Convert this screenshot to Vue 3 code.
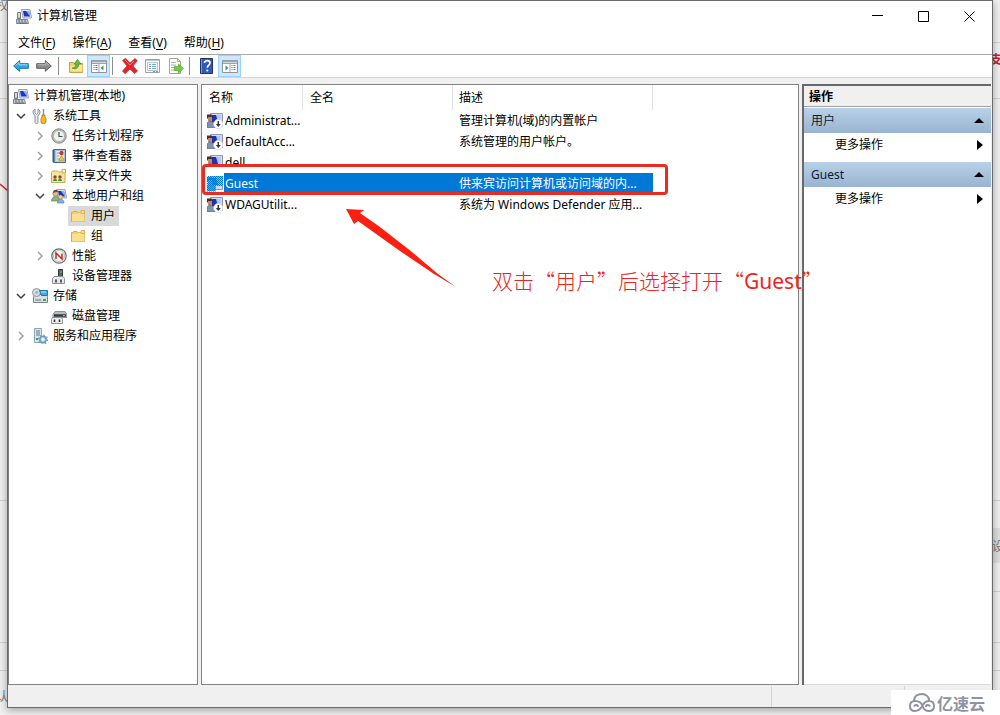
<script setup>
import { ref } from 'vue'

const monitor =
  '<path d="M5.500 1.500h8.500l1.500 8.500H7z" fill="#dfe3ec" stroke="#9aa3b5"/><path d="M7 3h6l1 5.500H8z" fill="#1b35c8"/><path d="M10 3h3l1 5.500z" fill="#8fb0f8"/>'

const person =
  '<path d="M3.500.5h12v13h-12z" fill="#cfdaf3" stroke="#8d99b8"/><path d="M5 2h6v7H5z" fill="#1c31b4"/><path d="M9 2h4.500v7H11z" fill="#b3c6f4"/><path d="M0 1.500h4.500l1 2-1 2H0z" fill="#4b2f22"/><path d="M1 4h4v4.500H1z" fill="#c08a72"/><path d="M0 10l2.500-2L8 10v4.500H0z" fill="#7d93b4" stroke="#45566e" stroke-width=".6"/>'

const icons = {
  computer:
    monitor +
    '<path d="M1.500 4.500h3v6h-3z" fill="#b8c0cc" stroke="#6f7a88"/><path d="M2 6h2M2 8h2" stroke="#eef2f6"/><path d="M0.500 11.500h11l1 4H0.500z" fill="#c3cad3" stroke="#7b8693"/><path d="M2 13h2m1 0h2m1 0h2M2 15h9" stroke="#5d6774"/>',
  tools:
    '<path d="M3 1v4l1.500 1.500L6 5V1c2 1 2.500 3.500 1.500 5L6 8v6.500c0 1.500-3 1.500-3 0V8L1.500 6C.5 4 1 2 3 1z" fill="#e4e8ec" stroke="#7f8a95" stroke-width=".9"/><path d="M11.500 1v6" stroke="#8995a1" stroke-width="1.500"/><path d="M10 7h3v2l1 1.500v4c-1 1.600-4 1.600-5 0v-4L10 9z" fill="#f4b526" stroke="#b47a0d" stroke-width=".8"/>',
  clock:
    '<circle cx="8" cy="8" r="7.200" fill="#b9bdc1" stroke="#85898e"/><circle cx="8" cy="8" r="5.500" fill="#f4f1dd" stroke="#9f9f9b" stroke-width=".6"/><path d="M8 4v4.500h3.500" fill="none" stroke="#31518a" stroke-width="1.200"/>',
  events:
    '<path d="M2.500 1.500h12v13h-12z" fill="#a9c6e6" stroke="#3c6a9c"/><path d="M1 3h3M1 5h3M1 7h3M1 9h3M1 11h3M1 13h3" stroke="#304e78"/><path d="M5.500 3h7.500v10H5.500z" fill="#f6f3dc"/><path d="M6 5h3M6 8h2M6 11h7" stroke="#7a93ba"/><circle cx="10.500" cy="5" r="2.200" fill="#d8332d"/><path d="M10.500 7.500l3 5h-6z" fill="#f1c232" stroke="#9a7b17" stroke-width=".5"/>',
  shared:
    '<path d="M.5 4.500l1-1.500h5l1 1h6.500v10.500H.5z" fill="#f8e49b" stroke="#cfa854"/><path d="M11 1.500h3.500V5H11z" fill="#fff3b5" stroke="#d0a848"/><path d="M2 13c0-3 4-3 4 0zM7 13c0-3 4-3 4 0z" fill="#3b9456"/><circle cx="4" cy="9" r="1.700" fill="#8b4a28"/><circle cx="9" cy="9" r="1.700" fill="#8b4a28"/>',
  users:
    monitor +
    '<circle cx="4.500" cy="5.500" r="2.700" fill="#e8b98c" stroke="#a07a50" stroke-width=".7"/><path d="M2 5c0-4 5-4 5-1-2 0-3 0-5 1z" fill="#6d4a2b"/><path d="M.5 13c0-6 8-6 8 0z" fill="#8db473" stroke="#5d8550" stroke-width=".7"/><circle cx="9.500" cy="9" r="2" fill="#f3d08c" stroke="#b98a45" stroke-width=".6"/><path d="M6.500 15c0-5 6.500-5 6.500 0z" fill="#86b3de" stroke="#4f7caa" stroke-width=".7"/>',
  folder:
    '<path d="M1.500 13.500v-9h1L4 3.500h3l1 1h6.500v9z" fill="#f2ce6d" stroke="#d3a850"/><path d="M2 6h6l1-1.500h5.500v9H2z" fill="#fbe08f"/><path d="M11 2.500h3.500v3H11z" fill="#f8dd89" stroke="#cca14b" stroke-width=".7"/>',
  performance:
    '<circle cx="8" cy="8" r="7.200" fill="#e9ecea" stroke="#66716c" stroke-width="1.200"/><circle cx="8" cy="8" r="5.500" fill="#fff" stroke="#a3aca7" stroke-width=".7"/><path d="M5 11V5l6 6V5.500" fill="none" stroke="#c52828" stroke-width="1.500"/>',
  device:
    '<path d="M7.500 1.500h4v7h-4z" fill="#596068" stroke="#33383e"/><path d="M9 3h2v2H9z" fill="#59ac6a"/><path d="M3 8.500h9l1.500 2v5h-12v-5z" fill="#e5e7e9" stroke="#8a9096"/><path d="M5 11.500v3m5-3v3" stroke="#292e33" stroke-width="1.500"/>',
  storage:
    '<path d="M1.500 8.500l2-2h10l2 2v6h-14z" fill="#d8dee3" stroke="#7a8791"/><path d="M3 12h6" stroke="#a0aab2" stroke-width="2"/><path d="M11 12h3" stroke="#36b54a" stroke-width="2"/><circle cx="4.500" cy="4.500" r="4" fill="#d5dde2" stroke="#8c979f"/><circle cx="4.500" cy="4.500" r="1.300" fill="#8aabc1"/><path d="M7.500 2.500h8v5h-6z" fill="#3fa9e2" stroke="#2272a6"/><path d="M9 4h5" stroke="#b9e8ff"/>',
  disk:
    '<path d="M4 3.500h10l2 3v3H2v-3z" fill="#b5bbc0" stroke="#8a9197"/><path d="M3 7.500h12" stroke="#343a40" stroke-width="2.500"/><path d="M12 7.500h2" stroke="#7dcc83"/><path d="M1.500 9.500h9l1 2v4h-11v-4z" fill="#eceef0" stroke="#8a9096"/><path d="M3.500 11.500v2.500m5-2.500v2.500" stroke="#292e33" stroke-width="1.500"/>',
  services:
    '<path d="M2.500.5h7v14h-7z" fill="#dce5ec" stroke="#8fa4b5"/><path d="M4 3h4M4 5h4M4 7h4" stroke="#5b7d98"/><path d="M4 11h2" stroke="#33aa48" stroke-width="2"/><circle cx="11" cy="11.500" r="3.200" fill="#b9d5eb" stroke="#6f9bc0" stroke-width="1.500"/><circle cx="11" cy="11.500" r="4.500" fill="none" stroke="#6f9bc0" stroke-width="1.200" stroke-dasharray="1.500 2"/><circle cx="11" cy="11.500" r="1.200" fill="#fff"/>',
  user: person,
  disabled:
    person +
    '<circle cx="11.300" cy="11" r="4.700" fill="#fff" stroke="#c4cad3" stroke-width=".6"/><path d="M11.300 8v4" stroke="#333" stroke-width="1.500"/><path d="M8.800 11h5l-2.500 3z" fill="#333"/>',
  back: '<path d="M.7 8l6-5.300v3h8.600v4.600H6.700v3z" fill="#2fa8e8" stroke="#1b6fae"/><path d="M2.500 7.500L6 4.500v2.300h8.500" fill="none" stroke="#93ddff"/>',
  forward:
    '<path d="M15.300 8l-6-5.300v3H.7v4.600h8.600v3z" fill="#8b8b8b" stroke="#5d5d5d"/><path d="M1.500 6.800h8.500V4.500l3.500 3" fill="none" stroke="#bebebe"/>',
  up: '<path d="M1.500 14.500v-10h4l1 1h8v9z" fill="#f4cf6a" stroke="#c9a14b"/><path d="M2.500 13V8l12-1v6.500z" fill="#fce49a"/><path d="M4 10c3 0 4-2 4-4H6l3.500-4.500L13 6h-2.300C10.500 10 8 12 4 10z" fill="#69bd38" stroke="#3b8421" stroke-width=".7"/>',
  treePane:
    '<path d="M.5 2.500h15v12H.5z" fill="#fff" stroke="#8b949d"/><path d="M1 3.500h14" stroke="#9fabb7" stroke-width="2"/><path d="M1 5.500h14M8 6v8" stroke="#9aa5b0"/><path d="M2.500 7.500h4m-4 2h4m-4 2h4" stroke="#487ba5" stroke-dasharray="1 1 3"/><path d="M12.500 7.500v5L9.500 10z" fill="#37a243"/>',
  actionPane:
    '<path d="M.5 2.500h15v12H.5z" fill="#fff" stroke="#8b949d"/><path d="M1 3.500h14" stroke="#9fabb7" stroke-width="2"/><path d="M1 5.500h14M8 6v8" stroke="#9aa5b0"/><path d="M9.500 7.500h4m-4 2h4m-4 2h4" stroke="#487ba5" stroke-dasharray="1 1 3"/><path d="M3.500 7.500v5l3-2.500z" fill="#37a243"/>',
  remove:
    '<path d="M.5 2.500L3.500.3 8 5 13 .5l2.300 2.100L11 8l4.500 5-3 2.500L8 11 3 15.700.5 13 5 8z" fill="#e3262b" stroke="#b9282c" stroke-width=".7"/><path d="M3 2l5 5 4-4" fill="none" stroke="#f58283"/>',
  properties:
    '<path d="M.5 1.500h14v13H.5z" fill="#fff" stroke="#98a2ad"/><path d="M1 2.500h13" stroke="#bcc6cf"/><path d="M2.500 4.500h10v8h-10z" fill="#f4f8fc" stroke="#b6c3d0"/><path d="M4 6.500h2m1 0h4m-7 2h2m1 0h4m-7 2h2m1 0h4" stroke="#7fa5c6"/><path d="M8 13.500h2m1 0h2" stroke="#8a959e"/>',
  export:
    '<path d="M1.500.5h8l3 3v12h-11z" fill="#fffef0" stroke="#a6a797"/><path d="M9.500.5v3h3" fill="none" stroke="#a6a797"/><path d="M3 4.500h5M3 7h5M3 9.500h3M3 12h5" stroke="#a9b2b9"/><path d="M6.500 8.500h4V6l5 4.500-5 4.500v-2.500h-4z" fill="#74cc45" stroke="#4fa534" stroke-width=".7"/>',
  help: '<path d="M1.500.5h12v15h-12z" fill="#3159b8" stroke="#1b3273"/><path d="M2.500 1v14" stroke="#7797dc"/><path d="M5.500 5c0-3.300 5.500-3 5.500 0 0 2-2.700 2.300-2.700 4.700" fill="none" stroke="#fff" stroke-width="1.700"/><circle cx="8.300" cy="12.500" r="1.100" fill="#fff"/>',
}

const menus = [
  ['文件', 'F'],
  ['操作', 'A'],
  ['查看', 'V'],
  ['帮助', 'H'],
]

const toolbar = [
  [
    { icon: 'back', tip: '后退' },
    { icon: 'forward', tip: '前进' },
  ],
  [
    { icon: 'up', tip: '向上一级' },
    { icon: 'treePane', tip: '显示/隐藏控制台树', on: true },
  ],
  [
    { icon: 'remove', tip: '删除' },
    { icon: 'properties', tip: '属性' },
    { icon: 'export', tip: '导出列表' },
  ],
  [
    { icon: 'help', tip: '帮助' },
    { icon: 'actionPane', tip: '显示/隐藏操作窗格', on: true },
  ],
]

const tree = [
  { level: 0, icon: 'computer', name: '计算机管理(本地)' },
  { level: 1, icon: 'tools', name: '系统工具', toggle: 'open' },
  { level: 2, icon: 'clock', name: '任务计划程序', toggle: 'closed' },
  { level: 2, icon: 'events', name: '事件查看器', toggle: 'closed' },
  { level: 2, icon: 'shared', name: '共享文件夹', toggle: 'closed' },
  { level: 2, icon: 'users', name: '本地用户和组', toggle: 'open' },
  { level: 3, icon: 'folder', name: '用户' },
  { level: 3, icon: 'folder', name: '组' },
  { level: 2, icon: 'performance', name: '性能', toggle: 'closed' },
  { level: 2, icon: 'device', name: '设备管理器' },
  { level: 1, icon: 'storage', name: '存储', toggle: 'open' },
  { level: 2, icon: 'disk', name: '磁盘管理' },
  { level: 1, icon: 'services', name: '服务和应用程序', toggle: 'closed' },
]
const current = ref('用户')

const users = [
  { name: 'Administrat...', icon: 'disabled', note: '管理计算机(域)的内置帐户' },
  { name: 'DefaultAcc...', icon: 'disabled', note: '系统管理的用户帐户。' },
  { name: 'dell', icon: 'user', note: '' },
  { name: 'Guest', icon: 'user', note: '供来宾访问计算机或访问域的内...' },
  { name: 'WDAGUtilit...', icon: 'disabled', note: '系统为 Windows Defender 应用...' },
]
const selected = ref('Guest')
</script>

<template>
  <div class="desktop" lang="zh-CN">
    <div class="behind" aria-hidden="true">
      <i class="rule r1"></i><i class="rule r2"></i><i class="rule r3"></i>
      <i class="rule r4"></i><i class="rule r5"></i><i class="rule r6"></i>
      <i class="band"></i>
      <span class="bit b1">权</span>
      <span class="bit b2">认</span>
      <span class="bit b3">支</span>
      <span class="bit b4">设</span>
      <svg class="slash" width="8" height="10"><path d="M0 1l8 7" stroke="#d8232f" stroke-width="1.500" /></svg>
    </div>

    <main class="window">
      <header class="titlebar">
        <svg class="icon" viewBox="0 0 16 16" v-html="icons.computer"></svg>
        <h1>计算机管理</h1>
        <button class="sys" aria-label="最小化">
          <svg width="11" height="11"><path d="M0 4.500h11" stroke="#000" /></svg>
        </button>
        <button class="sys" aria-label="最大化">
          <svg width="11" height="11"><path d="M.5.5h10v10H.5z" fill="none" stroke="#000" /></svg>
        </button>
        <button class="sys" aria-label="关闭">
          <svg width="11" height="11"><path d="M.5.5l10 10m0-10l-10 10" stroke="#000" /></svg>
        </button>
      </header>

      <nav class="menubar">
        <button v-for="[label, key] in menus" :key="key">{{ label }}(<u>{{ key }}</u>)</button>
      </nav>

      <div class="toolbar">
        <div v-for="(group, g) in toolbar" :key="g" class="group">
          <button
            v-for="tool in group"
            :key="tool.icon"
            :class="{ on: tool.on }"
            :aria-label="tool.tip"
          >
            <svg class="icon" viewBox="0 0 16 16" v-html="icons[tool.icon]"></svg>
          </button>
        </div>
      </div>

      <div class="panes">
        <ul class="tree">
          <li v-for="node in tree" :key="node.name" :class="'level' + node.level">
            <button v-if="node.toggle" class="toggle" :aria-label="node.name">
              <svg v-if="node.toggle === 'open'" width="10" height="10">
                <path d="M1 3l4 4 4-4" fill="none" stroke="#404040" stroke-width="1.500" />
              </svg>
              <svg v-else width="10" height="10">
                <path d="M3 1l4 4-4 4" fill="none" stroke="#a0a0a0" stroke-width="1.500" />
              </svg>
            </button>
            <span v-else-if="node.level" class="toggle"></span>
            <button class="node" :class="{ current: node.name === current }" @click="current = node.name">
              <svg class="icon" viewBox="0 0 16 16" v-html="icons[node.icon]"></svg>
              {{ node.name }}
            </button>
          </li>
        </ul>

        <section class="list">
          <table>
            <thead>
              <tr>
                <th class="c-name">名称</th>
                <th class="c-full">全名</th>
                <th class="c-note">描述</th>
              </tr>
            </thead>
            <tbody>
              <tr
                v-for="user in users"
                :key="user.name"
                :class="{ selected: user.name === selected }"
                @click="selected = user.name"
              >
                <td>
                  <div class="cell">
                    <span class="pic"><svg class="icon" viewBox="0 0 16 16" v-html="icons[user.icon]"></svg></span>
                    <span class="name">{{ user.name }}</span>
                  </div>
                </td>
                <td></td>
                <td>{{ user.note }}</td>
              </tr>
            </tbody>
          </table>
          <div class="mark"></div>
          <svg class="pointer" width="112" height="80" viewBox="0 0 112 80">
            <path d="M0 1l18 1-4 3 20 14 32 25 26 22 18 13-22-13-34-23L12 13l-4 3z" fill="#fb2012" />
          </svg>
          <p class="callout">双击“用户”后选择打开“<span>Guest</span>”</p>
        </section>

        <aside class="actions">
          <h2>操作</h2>
          <template v-for="title in ['用户', 'Guest']" :key="title">
            <button class="section">
              {{ title }}
              <svg width="10" height="5"><path d="M0 5h10L5 0z" /></svg>
            </button>
            <button class="more">
              更多操作
              <svg width="6" height="10"><path d="M0 0v10l6-5z" /></svg>
            </button>
          </template>
        </aside>
      </div>

      <footer class="status"><span></span><span></span><span></span></footer>
    </main>

    <div class="brand">
      <svg width="26" height="20" viewBox="0 0 26 20" fill="none" stroke="#8e93a3" stroke-width="2">
        <path d="M5 8C5 3 9 1 13 1s7 3 7 6" />
        <path d="M14 14c-1-4-4-6-8-6-3 0-5 2-5 5s2 5 5 5c5 0 6-3 8-6 1-2 3-4 6-4s5 2 5 5-2 5-5 5-5-1-6-4" />
        <path d="M5 13.500c1-2 4-2 4 .5M21 13.500c-1-2-4-2-4 .5" />
      </svg>
      <span>亿速云</span>
    </div>
  </div>
</template>

<style>
html,
body {
  margin: 0;
  height: 100%;
}
#app {
  height: 100%;
}
</style>

<style scoped>
* {
  box-sizing: border-box;
}
.desktop {
  position: relative;
  display: flex;
  height: 100vh;
  padding: 0 7px 7px;
  overflow: hidden;
  background: #f0f0f0;
  color: #000;
  font: 12px/20px 'Noto Sans', 'Noto Sans CJK SC', sans-serif;
}
button {
  margin: 0;
  padding: 0;
  border: 0;
  background: none;
  color: inherit;
  font: inherit;
}
svg {
  display: block;
  flex: none;
}
.icon {
  width: 16px;
  height: 16px;
}

.behind {
  position: absolute;
  inset: 0;
}
.rule,
.band {
  position: absolute;
  left: 0;
  right: 0;
  height: 1px;
  background: #d0d0d0;
}
.r1 { top: 42px; }
.r2 { top: 98px; }
.r3 { top: 500px; }
.r4 { top: 591px; left: 50%; }
.r5 { top: 642px; }
.r6 { top: 670px; }
.band {
  top: 528px;
  left: 50%;
  height: 35px;
  background: #dedede;
}
.bit {
  position: absolute;
  color: #777;
}
.b1 { top: -4px; left: -4px; }
.b2 { top: 687px; left: -4px; }
.b3 { top: 50px; left: 990px; color: #c8242b; font-weight: bold; }
.b4 { top: 537px; left: 992px; }
.slash {
  position: absolute;
  top: 183px;
  left: 0;
}

.window {
  position: relative;
  display: flex;
  flex: 1;
  flex-direction: column;
  min-width: 0;
  border: 1px solid #6b6b6b;
  background: #f0f0f0;
  box-shadow: 0 2px 8px rgba(0, 0, 0, 0.35);
}
.titlebar {
  display: flex;
  align-items: center;
  height: 30px;
  padding-left: 8px;
  background: #fff;
}
h1 {
  flex: 1;
  margin: 0 0 0 5px;
  font-size: 12px;
  font-weight: normal;
}
.sys {
  display: flex;
  align-items: center;
  justify-content: center;
  width: 46px;
  height: 28px;
}
.menubar {
  display: flex;
  gap: 1px;
  height: 24px;
  padding-left: 2px;
  border-bottom: 1px solid #a8a8a8;
  background: #fff;
}
.menubar button {
  padding: 0 8px;
}
u {
  text-underline-offset: 2px;
}
.toolbar {
  display: flex;
  height: 23px;
  padding-left: 1px;
  border-bottom: 1px solid #d5d5d5;
  background: #fff;
}
.group {
  display: flex;
}
.group + .group::before {
  content: '';
  width: 1px;
  height: 18px;
  margin: 2px 5px 2px 3px;
  background: #8c8c8c;
}
.group + .group ~ .group::before {
  margin-left: 2px;
}
.group button {
  display: flex;
  align-items: center;
  justify-content: center;
  width: 23px;
  height: 22px;
}
.group .on {
  border: 1px solid #99d1ff;
  background: #cce8ff;
}

.panes {
  display: flex;
  flex: 1;
  gap: 3px;
  min-height: 0;
  padding: 6px 1px 0 0;
}
.tree {
  flex: none;
  width: 190px;
  margin: 0;
  padding: 1px 0 0;
  border: 1px solid #828282;
  background: #fff;
  list-style: none;
}
.tree li {
  display: flex;
  height: 20px;
}
.level0 { padding-left: 2px; }
.level1 { padding-left: 3px; }
.level2 { padding-left: 22px; }
.level3 { padding-left: 41px; }
.toggle {
  display: flex;
  align-items: center;
  justify-content: center;
  width: 18px;
  height: 20px;
}
.node {
  display: flex;
  align-items: center;
  gap: 5px;
  padding: 0 4px 0 2px;
  white-space: nowrap;
}
.current {
  background: #d9d9d9;
}

.list {
  position: relative;
  flex: 1;
  min-width: 0;
  border: 1px solid #828282;
  background: #fff;
}
table {
  width: 451px;
  border-collapse: separate;
  border-spacing: 0;
  table-layout: fixed;
}
th,
td {
  height: 21px;
  padding: 0 0 0 7px;
  font-weight: normal;
  text-align: left;
  white-space: nowrap;
}
th {
  height: 25px;
  border-right: 1px solid #e2e2e2;
}
.c-name { width: 101px; }
.c-full { width: 150px; }
.c-note { width: 200px; }
td:first-child {
  padding-left: 5px;
}
td:last-child,
.c-note {
  padding-left: 6px;
}
.cell {
  display: flex;
  align-items: center;
  height: 21px;
}
.pic {
  margin-right: 2px;
}
.name {
  flex: 1;
}
.selected td {
  background: #0078d7;
  color: #fff;
}
.selected td:first-child {
  background: linear-gradient(90deg, #fff 22px, #0078d7 22px);
}
.selected .pic {
  position: relative;
}
.selected .pic::after {
  content: '';
  position: absolute;
  inset: 0;
  background:
    repeating-conic-gradient(#0078d7 0 25%, transparent 0 50%) 0 0 / 2px 2px,
    rgba(120, 180, 235, 0.5);
  clip-path: polygon(0 0, 100% 0, 100% 65%, 55% 65%, 55% 100%, 0 100%);
}
.mark {
  position: absolute;
  top: 79px;
  left: 0;
  width: 466px;
  height: 31px;
  border: 3px solid #ed2a20;
  border-radius: 4px;
  background: linear-gradient(#fff 6px, transparent 6px);
  pointer-events: none;
}
.pointer {
  position: absolute;
  top: 123px;
  left: 144px;
}
.callout {
  position: absolute;
  z-index: 1;
  top: 179px;
  left: 290px;
  margin: 0;
  color: #ee241c;
  font: 300 21px/32px 'Noto Sans CJK SC', sans-serif;
  white-space: nowrap;
}
.callout span {
  font-family: 'Noto Sans', sans-serif;
  font-weight: 400;
}

.actions {
  flex: none;
  width: 189px;
  border: solid #696969;
  border-width: 2px 0 0 2px;
  box-shadow: inset 0 -1px #d9d9d9;
  background: #fff;
}
h2 {
  height: 21px;
  margin: 0 0 1px;
  padding-left: 5px;
  border-bottom: 1px solid #a0a0a0;
  background: #f0f0f0;
  font-size: 12px;
  line-height: 21px;
}
.section,
.more {
  display: flex;
  align-items: center;
  justify-content: space-between;
  width: 100%;
  height: 25px;
  padding: 0 7px;
}
.section {
  background: linear-gradient(#b9d1e8, #99b4d1);
  color: #0c1a33;
}
.section svg {
  fill: #000;
}
.more {
  height: 24px;
  margin-bottom: 5px;
  padding: 0 8px 0 31px;
}

.status {
  display: flex;
  height: 22px;
  padding-top: 1px;
}
.status span:first-child {
  flex: 1;
}
.status span + span {
  width: 133px;
  border-left: 1px solid #d4d4d4;
}
.status span:last-child {
  width: 88px;
}

.brand {
  position: absolute;
  right: 0;
  bottom: 0;
  display: flex;
  align-items: center;
  gap: 2px;
  width: 109px;
  height: 25px;
  padding-left: 18px;
  background: #fff;
  color: #8e93a3;
  font: bold 16px/24px 'Noto Sans CJK SC', sans-serif;
}
</style>
